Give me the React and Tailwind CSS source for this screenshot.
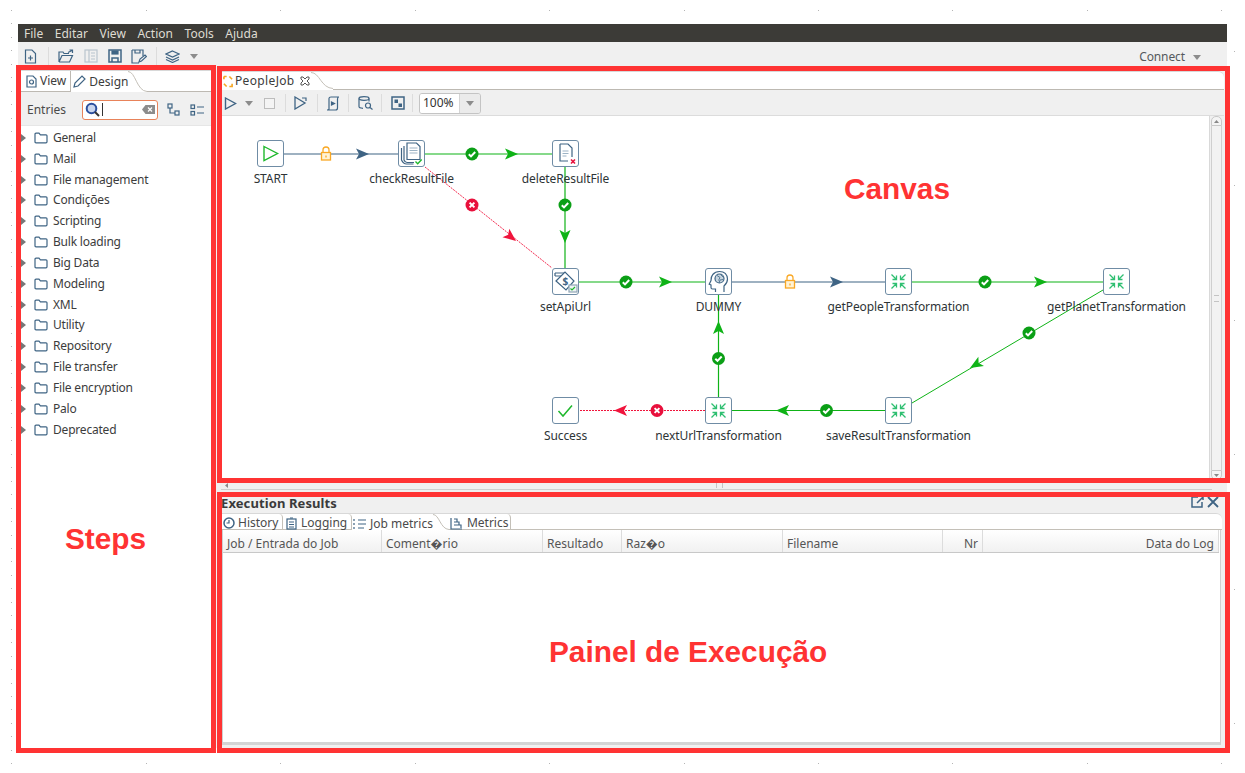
import React from "react";

const BLUE = "#3f6484";
const GREEN = "#0fb317";
const RED = "#f0143c";
const OX = 221;
const OY = 116;

const entries = ["General","Mail","File management","Condições","Scripting","Bulk loading","Big Data","Modeling","XML","Utility","Repository","File transfer","File encryption","Palo","Deprecated"];

const Svg = ({ w = 16, h = 16, children, className = "" }) => (
  <svg width={w} height={h} viewBox={`0 0 ${w} ${h}`} fill="none" stroke={BLUE} strokeWidth="1.2" className={`shrink-0 ${className}`}>{children}</svg>
);

const Drop = ({ color = "#8c8c8c" }) => (
  <svg width="8" height="5" viewBox="0 0 8 5" className="shrink-0"><path d="M0 0h8L4 5z" fill={color} /></svg>
);
const Sep = () => <div className="w-px h-[18px] bg-[#dcdcdc] shrink-0" />;

const Folder = () => (
  <Svg w={14} h={12}>
    <path d="M1 2.2q0-1 1-1h3l1.4 1.6h5.6q1 0 1 1v6q0 1-1 1H2q-1 0-1-1z" />
  </Svg>
);

function Arrow({ tip, dir, color }) {
  const [x, y] = tip;
  const [dx, dy] = dir;
  const L = 13, W = 5.5, N = 10;
  const px = -dy, py = dx;
  const pts = [
    [x, y],
    [x - dx * L + px * W, y - dy * L + py * W],
    [x - dx * N, y - dy * N],
    [x - dx * L - px * W, y - dy * L - py * W],
  ].map((p) => p.join(",")).join(" ");
  return <polygon points={pts} fill={color} stroke="none" />;
}

const Ok = ({ x, y }) => (
  <g transform={`translate(${x} ${y})`}>
    <circle r="6.5" fill="#0b9f16" />
    <path d="M-3.2 0.2L-1 2.4L3.2-2" stroke="#fff" strokeWidth="2" fill="none" />
  </g>
);
const Bad = ({ x, y }) => (
  <g transform={`translate(${x} ${y})`}>
    <circle r="6.5" fill="#e8103c" />
    <path d="M-2.4-2.4L2.4 2.4M2.4-2.4L-2.4 2.4" stroke="#fff" strokeWidth="2" fill="none" />
  </g>
);
const Lock = ({ x, y }) => (
  <g transform={`translate(${x} ${y})`} fill="none" stroke="#f9a825" strokeWidth="1.3">
    <rect x="-4.5" y="-1.5" width="9" height="7.5" fill="#fff3d6" />
    <path d="M-3-1.5v-2.5a3 3 0 0 1 6 0v2.5" />
    <path d="M0 1.5v2" />
  </g>
);

const Merge = () => (
  <svg width="27" height="27" viewBox="0 0 27 27" fill="none" stroke="#2fbf71" strokeWidth="1.3">
    <path d="M6.5 6.5l5 5M11.5 7.5v4h-4M20.5 6.5l-5 5M15.5 7.5v4h4M6.5 20.5l5-5M11.5 19.5v-4h-4M20.5 20.5l-5-5M15.5 19.5v-4h4" />
  </svg>
);
const StartIcon = () => (
  <svg width="27" height="27" viewBox="0 0 27 27" fill="none" stroke="#1fb82d" strokeWidth="1.4"><path d="M7 6.5L20.5 13.5L7 20.5z" /></svg>
);
const CheckFile = () => (
  <svg width="27" height="27" viewBox="0 0 27 27" fill="none" stroke={BLUE} strokeWidth="1.2">
    <path d="M3.5 8v12q2 4 5 4h7" />
    <path d="M6 6v14q1 2.500 3 2.500h7" />
    <path d="M9 3h9.500l3.500 3.500v13H9z" fill="#fff" />
    <path d="M11.500 8h8M11.500 10.500h8M11.500 13h8" stroke="#9db4c6" />
    <path d="M17.500 21.500l2.200 2.200l4-4.200" stroke="#1fb82d" strokeWidth="1.400" />
  </svg>
);
const DeleteFile = () => (
  <svg width="27" height="27" viewBox="0 0 27 27" fill="none" stroke={BLUE} strokeWidth="1.2">
    <path d="M8 4h8l4 4v9M8 4v17h8" />
    <path d="M10.500 11h6M10.500 13.500h6M10.500 16h4" stroke="#9db4c6" />
    <path d="M19 19.500l4 4M23 19.500l-4 4" stroke="#e8103c" strokeWidth="1.600" />
  </svg>
);
const SetVar = () => (
  <svg width="27" height="27" viewBox="0 0 27 27" fill="none" stroke={BLUE} strokeWidth="1.2">
    <path d="M3 5h9M3 8h6M3 5v3" />
    <path d="M4 13L13 4l9 9-8 9z" fill="#fff" />
    <text x="10.500" y="17" fontSize="10" fontWeight="700" fill={BLUE} stroke="none" fontFamily="Noto Sans, sans-serif">$</text>
    <rect x="17" y="17" width="8" height="7" fill="#eef2f5" stroke="#8fa5b5" />
    <path d="M18.500 20.500l1.500 1.500l3-3" stroke="#1fb82d" />
  </svg>
);
const Head = () => (
  <svg width="27" height="27" viewBox="0 0 27 27" fill="none" stroke={BLUE} strokeWidth="1.2">
    <path d="M10.500 24v-3H7.500q-1.500 0-1.500-1.500V17l-1.800-.8L6 12.500q0-4 1.800-6q2.500-3 6.700-3q7.500 0 8 7.500q0 4-3.500 7v6" />
    <circle cx="14.500" cy="10.500" r="4.500" fill="#c7d5df" stroke={BLUE} />
    <path d="M12 7.500l3 2-1.500 3M15.500 6.500l3 3M14 15l1-3 3-.5" stroke={BLUE} strokeWidth="0.8" />
  </svg>
);
const Success = () => (
  <svg width="27" height="27" viewBox="0 0 27 27" fill="none" stroke="#1fb82d" strokeWidth="1.5"><path d="M6.500 14l4.500 5L20 8.500" /></svg>
);

const nodes = [
  { x: 257, y: 140, label: "START", Icon: StartIcon },
  { x: 398, y: 140, label: "checkResultFile", Icon: CheckFile },
  { x: 552, y: 140, label: "deleteResultFile", Icon: DeleteFile },
  { x: 552, y: 268, label: "setApiUrl", Icon: SetVar },
  { x: 705, y: 268, label: "DUMMY", Icon: Head },
  { x: 885, y: 268, label: "getPeopleTransformation", Icon: Merge },
  { x: 1103, y: 268, label: "getPlanetTransformation", Icon: Merge },
  { x: 885, y: 397, label: "saveResultTransformation", Icon: Merge },
  { x: 705, y: 397, label: "nextUrlTransformation", Icon: Merge },
  { x: 552, y: 397, label: "Success", Icon: Success },
];

function Node({ n }) {
  const I = n.Icon;
  return (
    <div className="absolute" style={{ left: n.x - OX, top: n.y - OY }}>
      <div className="w-[27px] h-[27px] box-border bg-white border border-[#6f8ca5] rounded-[3px] flex items-center justify-center overflow-hidden">
        <div className="w-[27px] h-[27px] shrink-0"><I /></div>
      </div>
      <div className="absolute left-1/2 -translate-x-1/2 top-[29.500px] whitespace-nowrap text-[12px] leading-[18px] tracking-[-0.1px] text-[#2e3436]">{n.label}</div>
    </div>
  );
}

function Edges() {
  return (
    <svg className="absolute left-0 top-0" width="988" height="364" viewBox={`${OX} ${OY} 988 364`} fill="none">
      <path d="M284 154H398" stroke={BLUE} strokeWidth="1.2" />
      <Arrow tip={[369, 154]} dir={[1, 0]} color={BLUE} />
      <Lock x={326} y={154} />
      <path d="M425 154H552" stroke={GREEN} strokeWidth="1.2" />
      <Arrow tip={[518, 154]} dir={[1, 0]} color={GREEN} />
      <Ok x={472} y={154} />
      <path d="M565 167V268" stroke={GREEN} strokeWidth="1.2" />
      <Arrow tip={[565, 243]} dir={[0, 1]} color={GREEN} />
      <Ok x={565} y={205} />
      <path d="M425 167L552 268" stroke={RED} strokeWidth="0.9" strokeDasharray="2 1" />
      <Arrow tip={[516, 241]} dir={[0.78, 0.62]} color={RED} />
      <Bad x={472} y={205} />
      <path d="M579 282H705" stroke={GREEN} strokeWidth="1.2" />
      <Arrow tip={[672, 282]} dir={[1, 0]} color={GREEN} />
      <Ok x={626} y={282} />
      <path d="M732 282H885" stroke={BLUE} strokeWidth="1.2" />
      <Arrow tip={[843, 282]} dir={[1, 0]} color={BLUE} />
      <Lock x={790} y={282} />
      <path d="M912 282H1103" stroke={GREEN} strokeWidth="1.2" />
      <Arrow tip={[1047, 282]} dir={[1, 0]} color={GREEN} />
      <Ok x={985} y={282} />
      <path d="M1103 290L912 403" stroke={GREEN} strokeWidth="1" />
      <Arrow tip={[970, 368]} dir={[-0.86, 0.51]} color={GREEN} />
      <Ok x={1029} y={333} />
      <path d="M885 410.500H732" stroke={GREEN} strokeWidth="1.2" />
      <Arrow tip={[776, 410.5]} dir={[-1, 0]} color={GREEN} />
      <Ok x={826.5} y={410.5} />
      <path d="M718.500 397V295" stroke={GREEN} strokeWidth="1.2" />
      <Arrow tip={[718.5, 321]} dir={[0, -1]} color={GREEN} />
      <Ok x={718.5} y={358.5} />
      <path d="M705 410.500H579" stroke={RED} strokeWidth="1" strokeDasharray="2 1" />
      <Arrow tip={[614, 410.5]} dir={[-1, 0]} color={RED} />
      <Bad x={657} y={410.5} />
    </svg>
  );
}

function Dots() {
  const pts = [];
  for (let y = 10; y < 773; y += 13.45) pts.push([11, Math.round(y)]);
  for (let x = 146; x < 1245; x += 134.4) { pts.push([Math.round(x), 10]); pts.push([Math.round(x), 763]); }
  for (let y = 51; y < 773; y += 134.4) pts.push([1234, Math.round(y)]);
  return (
    <svg className="absolute left-0 top-0 pointer-events-none" width="1245" height="773">
      {pts.map((p, i) => <rect key={i} x={p[0]} y={p[1]} width="1" height="1" fill="#b5b5b5" />)}
    </svg>
  );
}

const Curve = ({ w = 20, h = 18 }) => (
  <svg width={w} height={h} viewBox={`0 0 ${w} ${h}`} className="shrink-0" fill="none">
    <path d={`M0 0.500C${w * 0.4} 0.500 ${w * 0.45} ${h - 1} ${w} ${h - 0.5}`} stroke="#c4c0b8" />
  </svg>
);

function ToolbarMain() {
  return (
    <div className="h-[24px] flex items-center pt-[4px] pl-[6px] pr-[26px] bg-[#f0f0f0] shrink-0">
      <Svg w={13} h={15}><path d="M1.500 1h6.500l3.500 3.500v9.500h-10z" /><path d="M6.500 6.500v5M4 9h5" /></Svg>
      <div className="w-px h-[18px] bg-[#dcdcdc] ml-[11px]" />
      <Svg w={16} h={14} className="ml-[9px]"><path d="M1 13V3h4l1 1.500h5M1 13h10.500l3-6.500H4L1 13" /><path d="M10 3.500l4-2M11.500 1h3v3" /></Svg>
      <Svg w={14} h={14} className="ml-[10px] opacity-30"><rect x="1" y="1" width="12" height="12" /><path d="M5 1v12M7 4h4M7 7h4M7 10h4" /></Svg>
      <Svg w={14} h={14} className="ml-[10px]"><path d="M1 1h12v12H1zM4 13V9h6v4" strokeWidth="1.500" /><rect x="4" y="2" width="6" height="3" fill={BLUE} /></Svg>
      <Svg w={16} h={15} className="ml-[9px]"><path d="M1 1h11v6M1 1v13h7M4 1v3h5V1" /><path d="M8 13l1-3 5-4 1.500 1.500-5 4.500z" /></Svg>
      <div className="w-px h-[18px] bg-[#dcdcdc] ml-[9px]" />
      <Svg w={15} h={13} className="ml-[8px]"><path d="M7.500 1l6.500 3-6.500 3L1 4z" /><path d="M1 7l6.500 3L14 7M1 9.500l6.500 3 6.500-3" /></Svg>
      <div className="ml-[10px]"><Drop /></div>
      <div className="ml-auto flex items-center gap-[8px] pt-[2px] text-[12px] tracking-[-0.1px] text-[#55595c]"><span>Connect</span><Drop /></div>
    </div>
  );
}

function Steps() {
  return (
    <div className="w-[198px] flex flex-col shrink-0 pt-[4px]">
      <div className="h-[22px] bg-white flex shrink-0 text-[12px] text-[#3c3c3c] pl-[3px] border-t border-[#d8d8d8]">
        <div className="flex items-center gap-[3px] pl-[5px] pr-[4px] border-r border-b border-[#bdb9b2]">
          <Svg w={11} h={13}><path d="M1 1h6l3 3v8H1z" /><circle cx="5.500" cy="7" r="2" /></Svg>
          <span>View</span>
        </div>
        <div className="flex items-center gap-[3px] pl-[2px]">
          <Svg w={13} h={13}><path d="M1 12l1-4 7-7 3 3-7 7z" /></Svg>
          <span>Design</span>
        </div>
        <Curve w={19} h={21} />
        <div className="flex-1 border-b border-[#bdb9b2]" />
      </div>
      <div className="h-[33px] bg-[#f0f0f0] flex items-center shrink-0 pl-[9px] pt-[2px] text-[12px] text-[#4a4a4a]">
        <span>Entries</span>
        <div className="ml-[16px] w-[76px] h-[20px] box-border bg-white border border-[#e8835a] rounded-[3px] flex items-center pl-[2px] pr-[2px]">
          <Svg w={15} h={15}><circle cx="6.500" cy="6.500" r="4.800" stroke="#2b4f9e" strokeWidth="2" fill="#c9d6ee" /><path d="M10 10l4 4" stroke="#333" strokeWidth="2" /></Svg>
          <div className="w-px h-[13px] bg-[#333] ml-[2px]" />
          <div className="ml-auto">
            <svg width="13" height="9" viewBox="0 0 13 9" fill="#8c8c8c"><path d="M0 4.500L3.500 0H13v9H3.500z" /><path d="M6 2.500l4 4M10 2.500l-4 4" stroke="#fff" strokeWidth="1.200" /></svg>
          </div>
        </div>
        <Svg w={13} h={13} className="ml-[9px]"><rect x="1" y="1" width="4" height="4" /><rect x="8" y="8" width="4" height="4" /><path d="M3 5v5h5" /></Svg>
        <Svg w={14} h={12} className="ml-[10px]"><rect x="1" y="1" width="3.500" height="3.500" /><rect x="1" y="7.500" width="3.500" height="3.500" /><path d="M7 3h7M7 9h7" /></Svg>
      </div>
      <div className="flex-1 bg-white pt-[1.500px] text-[12px] tracking-[-0.2px] text-[#3c3c3c] border-t border-[#e6e6e6]">
        {entries.map((e) => (
          <div key={e} className="h-[20.830px] flex items-center pl-[3px]">
            <svg width="5" height="8" viewBox="0 0 5 8" className="shrink-0"><path d="M0 0l5 4-5 4z" fill="#777" /></svg>
            <div className="ml-[8px]"><Folder /></div>
            <span className="ml-[5px]">{e}</span>
          </div>
        ))}
      </div>
    </div>
  );
}

function EditorToolbar() {
  return (
    <div className="h-[25px] flex items-center pl-[3px] pt-[1px] bg-[#f0f0f0] shrink-0">
      <Svg w={13} h={13}><path d="M1.500 1l10 5.500-10 5.500z" strokeWidth="1.400" /></Svg>
      <div className="ml-[8px]"><Drop /></div>
      <div className="ml-[11px] w-[11px] h-[11px] border border-[#bdbdbd] bg-[#f4f4f4]" />
      <div className="ml-[10px]"><Sep /></div>
      <Svg w={14} h={14} className="ml-[8px]"><path d="M1 1l10 6-10 6z" strokeWidth="1.300" /><path d="M8 2l4 0v3" /></Svg>
      <div className="ml-[9px]"><Sep /></div>
      <Svg w={14} h={15} className="ml-[8px]"><path d="M3 13V2.500Q3 1 5 1h8q-1.500 0-1.500 2v9q0 2-2 2H1q2 0 2-1" /><path d="M5.500 6l3 1.500-3 1.500z" fill={BLUE} /></Svg>
      <div className="ml-[8px]"><Sep /></div>
      <Svg w={15} h={14} className="ml-[9px]"><ellipse cx="6" cy="2.500" rx="5" ry="1.800" /><path d="M1 2.500v8q0 1.500 4 1.800M11 2.500v3" /><circle cx="10" cy="9.500" r="2.500" /><path d="M12 11.500l2.500 2" /></Svg>
      <div className="ml-[8px]"><Sep /></div>
      <Svg w={14} h={14} className="ml-[9px]"><rect x="1" y="1" width="12" height="12" strokeWidth="1.500" /><rect x="3.500" y="3.500" width="3.500" height="3.500" fill={BLUE} stroke="none" /><rect x="7.500" y="7.500" width="3.500" height="3.500" fill={BLUE} stroke="none" /></Svg>
      <div className="ml-[7px]"><Sep /></div>
      <div className="ml-[6px] w-[62px] h-[21px] box-border border border-[#c4c4c4] rounded-[3px] flex overflow-hidden text-[12px] text-[#333]">
        <div className="w-[40px] bg-white flex items-center pl-[3px] border-r border-[#d4d4d4]">100%</div>
        <div className="flex-1 bg-[#ebebeb] flex items-center justify-center"><Drop /></div>
      </div>
    </div>
  );
}

function VScroll() {
  return (
    <div className="w-[15px] shrink-0 bg-[#f0f0f0] flex flex-col pl-[1px] pr-[2px] border-l border-[#d9d9d9]">
      <div className="w-[11px] h-[10px] bg-[#f4f4f4] border border-[#c8c8c8] rounded-t-[5px] flex items-center justify-center">
        <svg width="5" height="3"><path d="M0 3l2.500-3L5 3z" fill="#888" /></svg>
      </div>
      <div className="w-[11px] flex-1 bg-[#f2f2f2] border-x border-[#cfcfcf] flex items-center justify-center">
        <div className="w-[5px] h-[7px] border-y border-[#c4c4c4]" />
      </div>
      <div className="w-[11px] h-[10px] bg-[#f4f4f4] border border-[#c8c8c8] rounded-b-[5px] flex items-center justify-center">
        <svg width="5" height="3"><path d="M0 0l2.500 3L5 0z" fill="#888" /></svg>
      </div>
    </div>
  );
}

function Editor() {
  return (
    <div className="h-[424px] flex flex-col shrink-0 pt-[5px]">
      <div className="h-[19px] bg-white flex shrink-0 text-[12px] text-[#3c3c3c] border-t border-[#d8d8d8] pl-[1px] rounded-tr-[6px]">
        <div className="flex items-center pl-[1px] pr-[1px]">
          <svg width="10" height="13" viewBox="0 0 11 13" fill="none" stroke="#f5a623" strokeWidth="1.800" className="shrink-0"><path d="M1 1h3M1 1v3M10 4L7 1M7 12h3v-3M1 9l3 3" /></svg>
          <span className="ml-[2px] tracking-[0.35px]">PeopleJob</span>
          <svg width="10" height="10" viewBox="0 0 10 10" fill="none" stroke="#555" className="ml-[5px] shrink-0"><path d="M1 1h2l2 2 2-2h2v2L7 5l2 2v2H7L5 7 3 9H1V7l2-2-2-2z" /></svg>
        </div>
        <Curve w={22} h={17} />
        <div className="flex-1 border-b border-[#bdb9b2] rounded-tr-[6px]" />
      </div>
      <EditorToolbar />
      <div className="flex-1 flex min-h-0 bg-white border-t border-[#dcdcdc]">
        <div className="flex-1 relative overflow-hidden bg-white">
          <Edges />
          {nodes.map((n) => <Node key={n.label} n={n} />)}
        </div>
        <VScroll />
      </div>
      <div className="h-[10px] bg-[#f0f0f0] border-y border-[#cfcfcf] shrink-0 flex mr-[12px] items-center pl-[4px]">
        <svg width="3" height="5" className="shrink-0"><path d="M3 0L0 2.500 3 5z" fill="#888" /></svg>
        <div className="ml-[488px] w-[7px] h-[5px] border-x border-[#c4c4c4]" />
      </div>
    </div>
  );
}

const cols = [
  { t: "Job / Entrada do Job", w: "w-[159px]" },
  { t: "Coment\uFFFDrio", w: "w-[161px]" },
  { t: "Resultado", w: "w-[79px]" },
  { t: "Raz\uFFFDo", w: "w-[161px]" },
  { t: "Filename", w: "w-[160px]" },
  { t: "Nr", w: "w-[40px]", r: true },
  { t: "Data do Log", w: "flex-1", r: true },
];

function Results() {
  return (
    <div className="flex-1 min-h-0 flex flex-col bg-[#f0f0f0] relative">
      <div className="h-[23px] shrink-0 flex items-end pb-[2px] pr-[5px]">
        <span className="text-[13px] font-bold tracking-[0.1px] text-[#3a3a3a] leading-[16px]">Execution Results</span>
        <div className="ml-auto self-start mt-[5px] flex items-center gap-[3px]">
          <Svg w={13} h={13}><path d="M7 2H1v10h10V7M6 8l6-6M8 1h4v4" strokeWidth="1.500" /></Svg>
          <Svg w={12} h={12}><path d="M1 1l10 10M11 1L1 11" strokeWidth="1.800" /></Svg>
        </div>
      </div>
      <div className="h-[17px] shrink-0 flex text-[12px] text-[#4a4a4a] bg-white border-t border-[#d8d8d8] rounded-tr-[6px] mr-[2px] pl-[1px]">
        <div className="w-[61px] flex items-center gap-[3px] pl-[1px] pt-[3px] border-b border-r border-[#c4c0b8] rounded-tr-[4px]">
          <Svg w={12} h={12}><circle cx="6" cy="6" r="5" strokeWidth="1.500" /><path d="M6 3v3H3.500" /></Svg><span>History</span>
        </div>
        <div className="w-[69px] flex items-center gap-[4px] pl-[3px] pt-[3px] border-b border-r border-[#c4c0b8] rounded-tr-[4px]">
          <Svg w={11} h={13}><rect x="1" y="2" width="9" height="10" /><path d="M3 5h5M3 7.500h5M3 10h5M4 1h3" /></Svg><span>Logging</span>
        </div>
        <div className="flex items-center gap-[3px] pl-[1px] pt-[3px]">
          <Svg w={14} h={12}><path d="M1 1v2M1 5v2M1 9v2M5 2h8M5 6h8M5 10h6" /></Svg><span>Job metrics</span>
        </div>
        <Curve w={16} h={16} />
        <div className="w-[62px] flex items-center gap-[4px] pl-[1px] pt-[3px] border-b border-r border-[#c4c0b8] rounded-tr-[4px]">
          <Svg w={13} h={13}><path d="M1 1v11h11M4 2h3v3h-3M4 5h5v3H4M4 8h7v3" /></Svg><span>Metrics</span>
        </div>
        <div className="flex-1 border-b border-[#c4c0b8]" />
      </div>
      <div className="flex-1 min-h-0 flex flex-col bg-white border-x border-[#d0d0d0] border-b-[3px] border-b-[#d4d4d4] mr-[3px] ml-[1px] mb-[3px]">
        <div className="h-[23px] shrink-0 flex mr-[1px] bg-gradient-to-b from-white to-[#f1f1f1] border-b border-[#c8c8c8] text-[12px] text-[#555]">
          {cols.map((c) => (
            <div key={c.t} className={`${c.w} flex items-center px-[4px] pt-[5px] border-r border-[#dcdcdc] whitespace-nowrap ${c.r ? "justify-end" : ""}`}>{c.t}</div>
          ))}
        </div>
      </div>
    </div>
  );
}

const Box = ({ c }) => <div className={`absolute border-[5px] border-[#ff3333] pointer-events-none ${c}`} />;
const Note = ({ c, t }) => (
  <div className={`absolute text-[#ff3333] font-bold text-[29.800px] leading-[36px] whitespace-nowrap font-['Liberation_Sans',sans-serif] ${c}`}>{t}</div>
);

export default function App() {
  return (
    <div className="relative w-[1245px] h-[773px] overflow-hidden bg-white box-border pt-[24px] px-[18px] pb-[25px] flex flex-col font-['Noto_Sans',sans-serif]">
      <Dots />
      <div className="relative flex-1 min-h-0 flex flex-col bg-[#f0f0f0]">
        <div className="h-[18px] shrink-0 bg-[#3c3b37] flex items-center pl-[6px] pt-[2px] gap-[11.600px] text-[12px] text-[#dfdbd2]">
          {["File","Editar","View","Action","Tools","Ajuda"].map((m) => <span key={m}>{m}</span>)}
        </div>
        <ToolbarMain />
        <div className="flex-1 min-h-0 flex">
          <Steps />
          <div className="w-[5px] shrink-0" />
          <div className="flex-1 min-w-0 flex flex-col pr-[3px]">
            <Editor />
            <Results />
          </div>
        </div>
      </div>
      <Box c="left-[16px] top-[65px] w-[200px] h-[688px]" />
      <Box c="left-[217px] top-[66px] w-[1013px] h-[417px]" />
      <Box c="left-[217px] top-[492px] w-[1013px] h-[261px]" />
      <Note c="left-[65px] top-[521px]" t="Steps" />
      <Note c="left-[844px] top-[171px]" t="Canvas" />
      <Note c="left-[549px] top-[634px]" t="Painel de Execução" />
    </div>
  );
}
